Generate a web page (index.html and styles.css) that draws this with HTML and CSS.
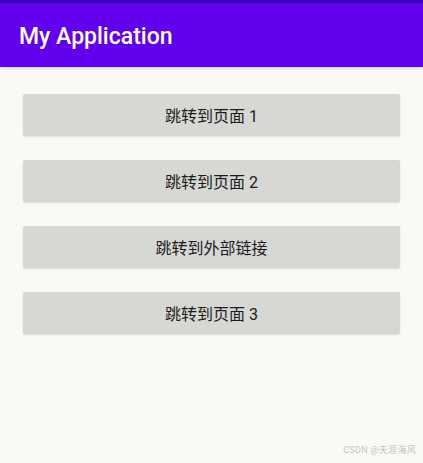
FILE: index.html
```html
<!DOCTYPE html>
<html lang="zh">
  <head>
    <meta charset="UTF-8" />
    <title>My Application</title>
    <link rel="stylesheet" href="styles.css">
  </head>
  <body>
    <div class="status-bar"></div>
    <header class="app-bar">My Application</header>

    <main class="content">
      <button class="nav-button">跳转到页面 1</button>
      <button class="nav-button">跳转到页面 2</button>
      <button class="nav-button">跳转到外部链接</button>
      <button class="nav-button">跳转到页面 3</button>
    </main>

    <div class="watermark">CSDN @天涯海风</div>
  </body>
</html>
```

FILE: styles.css
```css
html,
body {
  height: 100%;
}
body {
  margin: 0;
  background: #f9f9f6;
  font-family: Roboto, "Noto Sans CJK SC", sans-serif;
  position: relative;
  overflow: hidden;
}
.status-bar {
  height: 3px;
  background: #3700b3;
}
.app-bar {
  height: 64px;
  box-sizing: border-box;
  padding: 2px 19px 0;
  display: flex;
  align-items: center;
  background: #6200ee;
  color: #fff;
  font-size: 23px;
  font-weight: 500;
  box-shadow: 0 1px 3px rgba(0, 0, 0, 0.2);
}
.content {
  display: flex;
  flex-direction: column;
  gap: 24px;
  padding: 27px 23px 0;
}
.nav-button {
  height: 42px;
  border: none;
  border-radius: 2px;
  background: #d7d7d4;
  color: #1c1c1c;
  font-family: Roboto, "Noto Sans CJK SC", sans-serif;
  font-size: 16px;
  box-shadow: 0 1px 2px rgba(0, 0, 0, 0.12);
  cursor: pointer;
}
.watermark {
  position: absolute;
  right: 7px;
  bottom: 7px;
  font-size: 9px;
  letter-spacing: 0.3px;
  color: #c4c4c4;
}
```
